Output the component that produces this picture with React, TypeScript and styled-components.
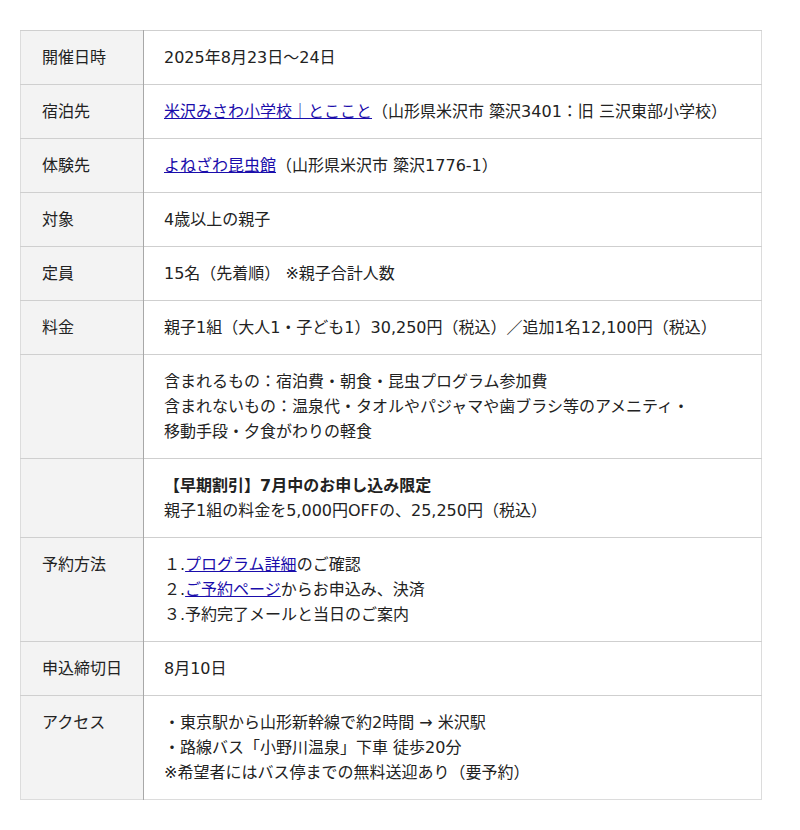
import * as React from 'react';
import styled, { createGlobalStyle } from 'styled-components';

const GlobalStyle = createGlobalStyle`
  body {
    margin: 0;
    background: #fff;
    font-family: "DejaVu Sans", "Noto Sans CJK JP", sans-serif;
    color: #222;
  }
`;

const Page = styled.div`
  padding: 30px 38px 30px 20px;
`;

const Table = styled.table`
  width: 742px;
  border-collapse: collapse;
  border: 1px solid #dcdcdc;
  font-size: 16px;
  line-height: 25px;
`;

const Label = styled.th`
  width: 81px;
  padding: 14px 20px 14px 21px;
  background: #f3f3f3;
  border-top: 1px solid #cfcfcf;
  border-right: 1px solid #a8a8a8;
  font-weight: normal;
  text-align: left;
  vertical-align: top;
  white-space: nowrap;
`;

const Value = styled.td`
  padding: 14px 20px;
  border-top: 1px solid #cfcfcf;
  vertical-align: top;
`;

const Link = styled.a`
  color: #1a0dab;
  text-decoration: underline;
`;

const Strong = styled.strong`
  font-weight: bold;
`;

interface RowProps {
  label?: string;
  children: React.ReactNode;
}

function Row({ label, children }: RowProps) {
  return (
    <tr>
      <Label>{label}</Label>
      <Value>{children}</Value>
    </tr>
  );
}

export default function App() {
  return (
    <Page>
      <GlobalStyle />
      <Table>
        <tbody>
          <Row label="開催日時">2025年8月23日〜24日</Row>
          <Row label="宿泊先">
            <Link href="#">米沢みさわ小学校｜とここと</Link>
            （山形県米沢市 簗沢3401：旧 三沢東部小学校）
          </Row>
          <Row label="体験先">
            <Link href="#">よねざわ昆虫館</Link>（山形県米沢市 簗沢1776-1）
          </Row>
          <Row label="対象">4歳以上の親子</Row>
          <Row label="定員">15名（先着順） ※親子合計人数</Row>
          <Row label="料金">
            親子1組（大人1・子ども1）30,250円（税込）／追加1名12,100円（税込）
          </Row>
          <Row>
            含まれるもの：宿泊費・朝食・昆虫プログラム参加費
            <br />
            含まれないもの：温泉代・タオルやパジャマや歯ブラシ等のアメニティ・
            <br />
            移動手段・夕食がわりの軽食
          </Row>
          <Row>
            <Strong>【早期割引】7月中のお申し込み限定</Strong>
            <br />
            親子1組の料金を5,000円OFFの、25,250円（税込）
          </Row>
          <Row label="予約方法">
            １.<Link href="#">プログラム詳細</Link>のご確認
            <br />
            ２.<Link href="#">ご予約ページ</Link>からお申込み、決済
            <br />
            ３.予約完了メールと当日のご案内
          </Row>
          <Row label="申込締切日">8月10日</Row>
          <Row label="アクセス">
            ・東京駅から山形新幹線で約2時間 → 米沢駅
            <br />
            ・路線バス「小野川温泉」下車 徒歩20分
            <br />
            ※希望者にはバス停までの無料送迎あり（要予約）
          </Row>
        </tbody>
      </Table>
    </Page>
  );
}
